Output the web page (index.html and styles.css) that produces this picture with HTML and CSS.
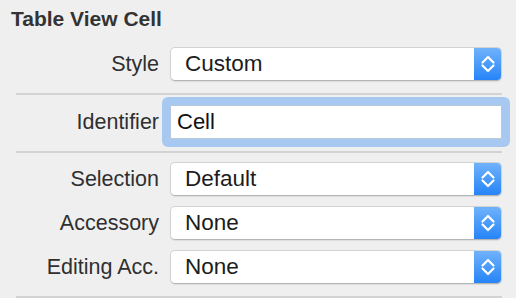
FILE: index.html
```html
<!DOCTYPE html>
<html lang="en">
<head>
<meta charset="UTF-8">
<title>Table View Cell</title>
<link rel="stylesheet" href="styles.css">
</head>
<body>
<div class="panel">
    <h2 class="title">Table View Cell</h2>

    <div class="row first">
        <label class="label">Style</label>
        <div class="select">
            <span class="value">Custom</span>
            <span class="stepper"><svg width="28" height="34" viewBox="0 0 28 34"><path d="M8.5 15.5 L14 10 L19.5 15.5 M8.5 18.5 L14 24 L19.5 18.5" fill="none" stroke="#fff" stroke-width="2.2" stroke-linecap="round" stroke-linejoin="round"/></svg></span>
        </div>
    </div>
    <hr class="sep">

    <div class="row ident">
        <label class="label">Identifier</label>
        <div class="ring"><input class="field" type="text" value="Cell"></div>
    </div>
    <hr class="sep">

    <div class="row">
        <label class="label">Selection</label>
        <div class="select">
            <span class="value">Default</span>
            <span class="stepper"><svg width="28" height="34" viewBox="0 0 28 34"><path d="M8.5 15.5 L14 10 L19.5 15.5 M8.5 18.5 L14 24 L19.5 18.5" fill="none" stroke="#fff" stroke-width="2.2" stroke-linecap="round" stroke-linejoin="round"/></svg></span>
        </div>
    </div>
    <div class="row">
        <label class="label">Accessory</label>
        <div class="select">
            <span class="value">None</span>
            <span class="stepper"><svg width="28" height="34" viewBox="0 0 28 34"><path d="M8.5 15.5 L14 10 L19.5 15.5 M8.5 18.5 L14 24 L19.5 18.5" fill="none" stroke="#fff" stroke-width="2.2" stroke-linecap="round" stroke-linejoin="round"/></svg></span>
        </div>
    </div>
    <div class="row">
        <label class="label">Editing Acc.</label>
        <div class="select">
            <span class="value">None</span>
            <span class="stepper"><svg width="28" height="34" viewBox="0 0 28 34"><path d="M8.5 15.5 L14 10 L19.5 15.5 M8.5 18.5 L14 24 L19.5 18.5" fill="none" stroke="#fff" stroke-width="2.2" stroke-linecap="round" stroke-linejoin="round"/></svg></span>
        </div>
    </div>
    <hr class="sep">
</div>
</body>
</html>
```

FILE: styles.css
```css
body {
    margin: 0;
    background-color: #efefef;
    font-family: "Liberation Sans", Arial, sans-serif;
    color: #2b2b2b;
}

.panel {
    padding-top: 7px;
}

.title {
    margin: 0 0 0 11px;
    font-size: 21px;
    line-height: 24px;
    font-weight: bold;
    color: #333;
}

.row {
    display: grid;
    grid-template-columns: 159px 332px;
    column-gap: 11px;
    align-items: center;
    margin-top: 10px;
}

.row.first {
    margin-top: 16px;
}

.sep + .row {
    margin-top: 9px;
}

.sep + .row.ident {
    margin-top: 10px;
}

.label {
    text-align: right;
    font-size: 21.5px;
    color: #2f2f2f;
    white-space: nowrap;
}

.select {
    display: flex;
    align-items: center;
    height: 34px;
    box-sizing: border-box;
    background-color: #fff;
    border: 1px solid #d2d2d2;
    border-bottom-color: #b4b4b4;
    border-radius: 5px;
    box-shadow: 0 1px 1px rgba(0, 0, 0, 0.08);
    overflow: hidden;
}

.value {
    flex: 1;
    padding-left: 14px;
    font-size: 22.5px;
    color: #1c1c1c;
}

.stepper {
    width: 28px;
    height: 34px;
    margin: -1px -1px -1px 0;
    display: flex;
    background: linear-gradient(#72b4fb, #2483f8);
    border-radius: 0 5px 5px 0;
}

.ring {
    margin: -8px;
    padding: 8px;
    border-radius: 6px;
    background-color: #a7c9f1;
    display: flex;
}

.field {
    flex: 1;
    width: 100%;
    height: 34px;
    box-sizing: border-box;
    margin: 0;
    padding: 0 6px;
    border: 1px solid #b9c9dc;
    border-radius: 1px;
    background-color: #fff;
    font-family: "Liberation Sans", Arial, sans-serif;
    font-size: 22px;
    color: #111;
    outline: none;
}

.sep {
    margin: 12px 0 0 16px;
    width: 486px;
    height: 2px;
    border: none;
    background-color: #d3d3d3;
}
```
